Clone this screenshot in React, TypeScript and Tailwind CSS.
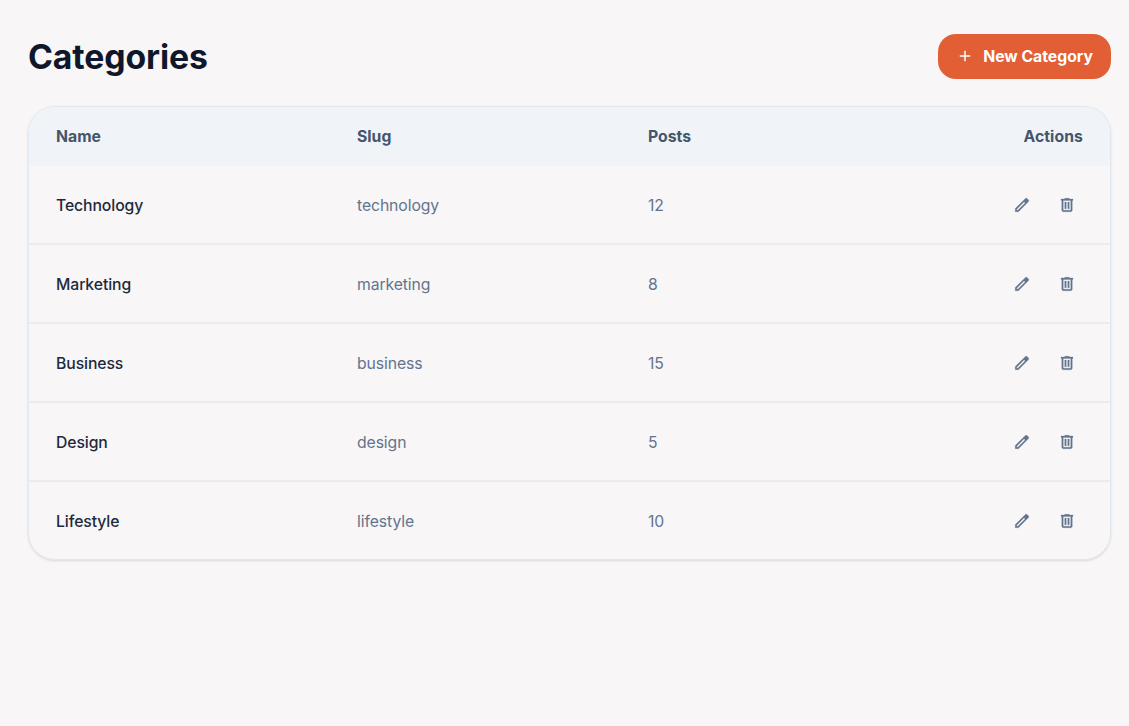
import React from "react";

const rows = [
  { name: "Technology", slug: "technology", posts: 12 },
  { name: "Marketing", slug: "marketing", posts: 8 },
  { name: "Business", slug: "business", posts: 15 },
  { name: "Design", slug: "design", posts: 5 },
  { name: "Lifestyle", slug: "lifestyle", posts: 10 },
];

const columns = "grid grid-cols-[301px_291px_1fr_auto] items-center px-[27px]";

function EditIcon() {
  return (
    <svg viewBox="0 -960 960 960" className="size-[18px]" fill="currentColor" stroke="currentColor" strokeWidth="14">
      <path d="M200-200h57l391-391-57-57-391 391v57Zm-80 80v-170l528-527q12-11 26.500-17t30.500-6q16 0 31 6t26 18l55 56q12 11 17.500 26t5.500 30q0 16-5.500 30.500T817-647L290-120H120Z" />
    </svg>
  );
}

function TrashIcon() {
  return (
    <svg viewBox="0 -960 960 960" className="size-[18px]" fill="currentColor" stroke="currentColor" strokeWidth="14">
      <path d="M280-120q-33 0-56.500-23.500T200-200v-520h-40v-80h200v-40h240v40h200v80h-40v520q0 33-23.500 56.500T680-120H280Zm400-600H280v520h400v-520ZM360-280h80v-360h-80v360Zm160 0h80v-360h-80v360Z" />
    </svg>
  );
}

function PlusIcon() {
  return (
    <svg viewBox="0 -960 960 960" className="size-[18px]" fill="currentColor">
      <path d="M440-440H200v-80h240v-240h80v240h240v80H520v240h-80v-240Z" />
    </svg>
  );
}

export default function App() {
  return (
    <main className="min-h-screen bg-[#f8f6f6] pt-[33.500px] pr-[18px] pl-[28px] font-['Inter',sans-serif]">
      <header className="flex h-[45px] items-center justify-between">
        <h1 className="text-[33.75px] leading-[45px] font-bold tracking-[-0.003em] text-slate-900">Categories</h1>
        <button className="flex h-[45px] items-center gap-[9px] rounded-[18px] bg-[#e25e35] px-[18px] text-[15.75px] font-bold text-white">
          <PlusIcon />
          <span className="pt-px">New Category</span>
        </button>
      </header>
      <section className="mt-[27.500px] overflow-hidden rounded-[27px] border border-slate-200 shadow-sm">
        <div className={`${columns} h-[59px] bg-[#f0f4f8] text-[15.75px] font-bold text-slate-600`}>
          <span>Name</span>
          <span>Slug</span>
          <span>Posts</span>
          <span className="tracking-[0.005em]">Actions</span>
        </div>
        <div>
          {rows.map((row) => (
            <div key={row.slug} className={`${columns} h-[79px] border-b-2 border-[#e9edf2] pt-[2px] text-[15.75px] tracking-[-0.006em] text-slate-500 last:h-[77px] last:border-b-0`}>
              <span className="font-medium text-slate-800">{row.name}</span>
              <span>{row.slug}</span>
              <span>{row.posts}</span>
              <span className="flex items-center gap-[27px] pr-[7px] pb-[2px] text-slate-500">
                <button aria-label="Edit"><EditIcon /></button>
                <button aria-label="Delete"><TrashIcon /></button>
              </span>
            </div>
          ))}
        </div>
      </section>
    </main>
  );
}
